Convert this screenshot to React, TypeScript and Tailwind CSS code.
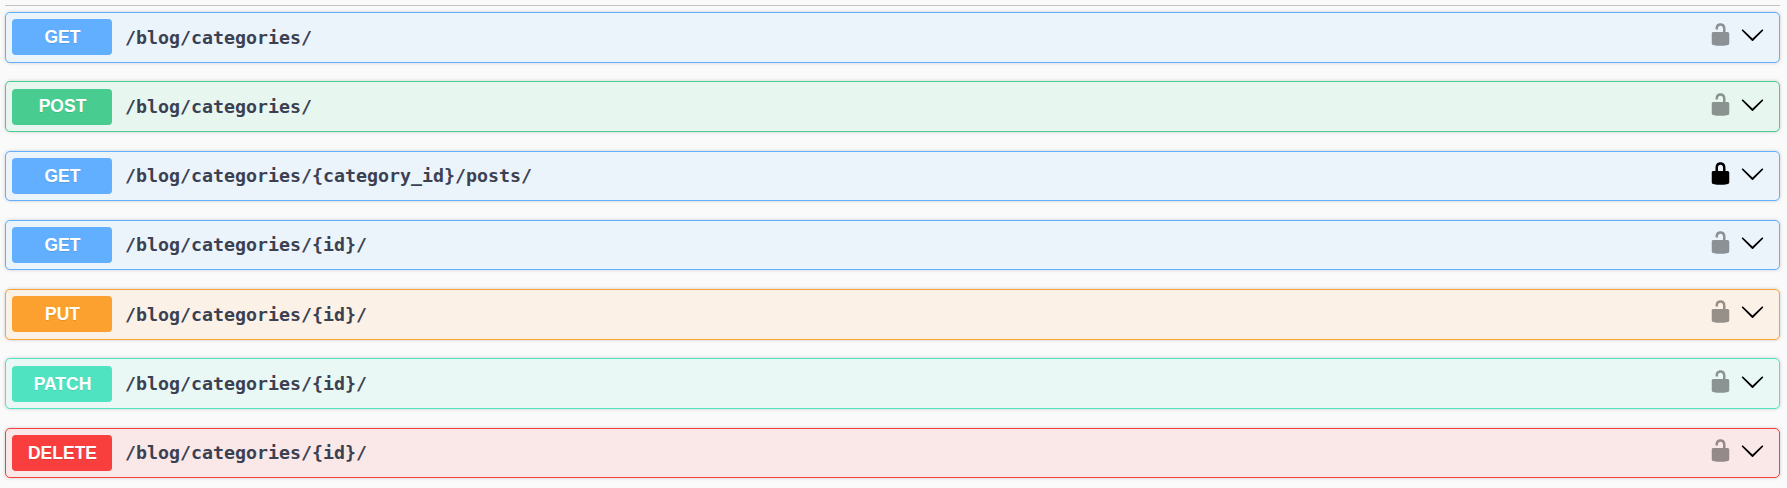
const methods = [
  { m: 'GET', p: '/blog/categories/', row: 'border-[#61affe] bg-[#ebf3fb]', btn: 'bg-[#61affe]' },
  { m: 'POST', p: '/blog/categories/', row: 'border-[#49cc90] bg-[#e8f6f0]', btn: 'bg-[#49cc90]' },
  { m: 'GET', p: '/blog/categories/{category_id}/posts/', locked: true, row: 'border-[#61affe] bg-[#ebf3fb]', btn: 'bg-[#61affe]' },
  { m: 'GET', p: '/blog/categories/{id}/', row: 'border-[#61affe] bg-[#ebf3fb]', btn: 'bg-[#61affe]' },
  { m: 'PUT', p: '/blog/categories/{id}/', row: 'border-[#fca130] bg-[#fbf1e6]', btn: 'bg-[#fca130]' },
  { m: 'PATCH', p: '/blog/categories/{id}/', row: 'border-[#50e3c2] bg-[#e9f8f5]', btn: 'bg-[#50e3c2]' },
  { m: 'DELETE', p: '/blog/categories/{id}/', row: 'border-[#f93e3e] bg-[#fae7e7]', btn: 'bg-[#f93e3e]' },
];

const UNLOCKED =
  'M15.8 8H14V5.6C14 2.703 12.665 1 10 1 7.334 1 6 2.703 6 5.6V6h2v-.801C8 3.754 8.797 3 10 3c1.203 0 2 .754 2 2.199V8H4c-.553 0-1 .646-1 1.199V17c0 .549.428 1.139.951 1.307l1.197.387C5.672 18.861 6.55 19 7.1 19h5.8c.549 0 1.428-.139 1.951-.307l1.196-.387c.524-.167.953-.757.953-1.306V9.199C17 8.646 16.352 8 15.8 8z';
const LOCKED =
  'M15.8 8H14V5.6C14 2.703 12.665 1 10 1 7.334 1 6 2.703 6 5.6V8H4c-.553 0-1 .646-1 1.199V17c0 .549.428 1.139.951 1.307l1.197.387C5.672 18.861 6.55 19 7.1 19h5.8c.549 0 1.428-.139 1.951-.307l1.196-.387c.524-.167.953-.757.953-1.306V9.199C17 8.646 16.352 8 15.8 8zM12 8H8V5.199C8 3.754 8.797 3 10 3c1.203 0 2 .754 2 2.199V8z';

export default function App() {
  return (
    <div className="h-[488px] overflow-hidden bg-[#fafafa] pl-[5px] pr-[7px] pt-[5px]">
      <div className="mb-[5.95px] h-px bg-[#c0c1c3]" />
      <div className="flex flex-col gap-[18.7px]">
        {methods.map((e, i) => (
          <div
            key={i}
            className={`flex h-[50.6px] items-center rounded-[5px] border pl-[6px] pr-[14px] shadow-[0_0_3.75px_rgba(0,0,0,0.19)] ${e.row}`}
          >
            <span
              className={`flex h-9 w-[100px] items-center justify-center rounded-[3.75px] pl-px font-['Liberation_Sans',sans-serif] text-[17.5px] font-bold text-white [text-shadow:0_1px_0_rgba(0,0,0,0.1)] ${e.btn}`}
            >
              {e.m}
            </span>
            <span className="ml-[13px] flex-1 font-['DejaVu_Sans_Mono',monospace] text-[18.27px] font-semibold text-[#3b4151]">
              {e.p}
            </span>
            <svg viewBox="0 0 20 20" className={e.locked ? 'mb-[5px] size-[25px]' : 'mb-[5px] size-[25px] opacity-40'}>
              <path d={e.locked ? LOCKED : UNLOCKED} />
            </svg>
            <svg viewBox="0 0 20 20" className="mb-[5px] ml-[7px] size-[25px]">
              <path d="M17.418 6.109c.272-.268.709-.268.979 0s.271.701 0 .969l-7.908 7.83c-.27.268-.707.268-.979 0l-7.908-7.83c-.27-.268-.27-.701 0-.969.271-.268.709-.268.979 0L10 13.25l7.418-7.141z" />
            </svg>
          </div>
        ))}
      </div>
    </div>
  );
}
